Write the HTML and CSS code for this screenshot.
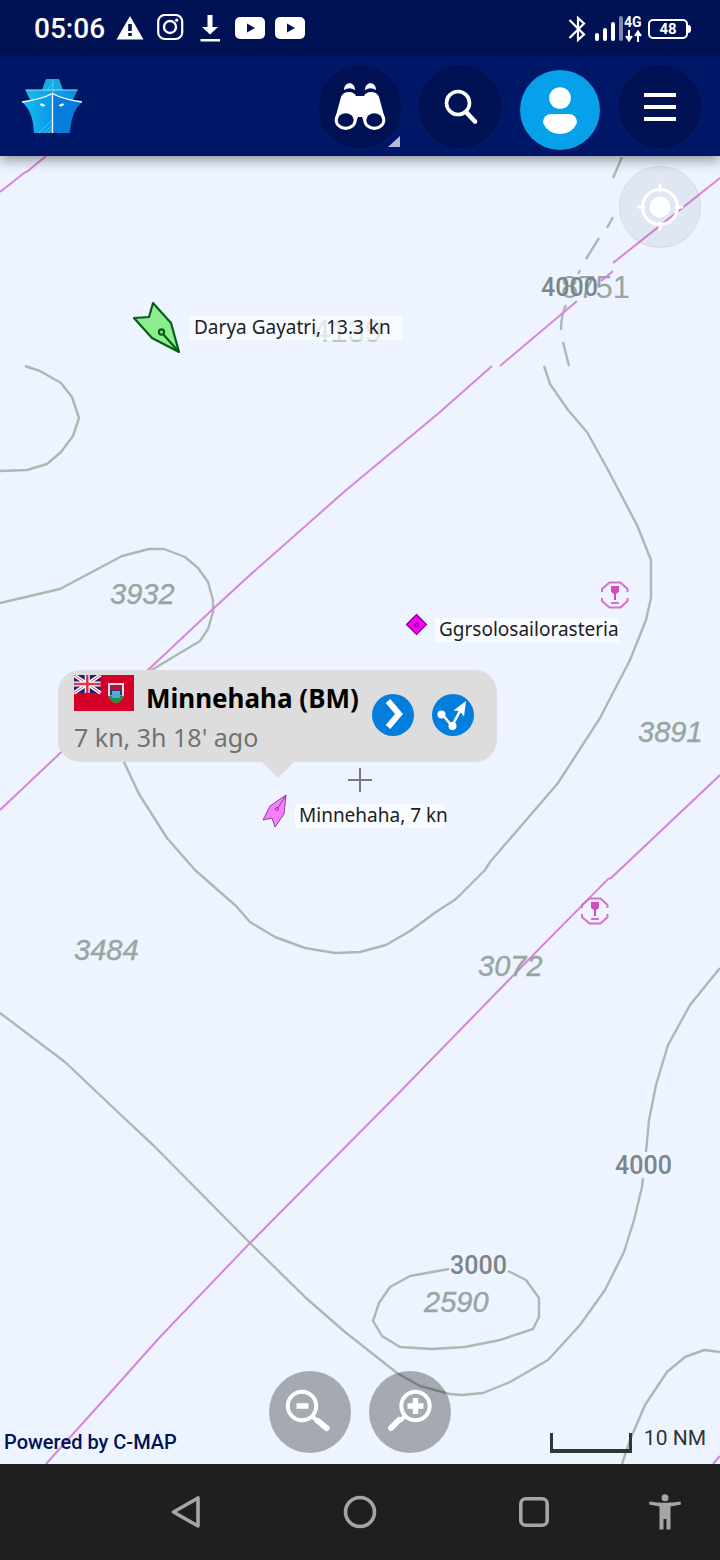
FILE: index.html
```html
<!DOCTYPE html>
<html lang="en">
<head>
<meta charset="utf-8">
<meta name="viewport" content="width=device-width, initial-scale=1">
<title>Live map</title>
<link rel="stylesheet" href="styles.css">
</head>
<body>
<div class="screen">
  <div class="status">
    <div class="status-left">
      <span class="clock">05:06</span>
      <svg width="30" height="30" viewBox="0 0 30 30"><path d="M15 2 28.500 25.500H1.500Z" fill="#fff"/><path d="M15 10v7M15 19v3" stroke="#001253" stroke-width="3.600"/></svg>
      <svg width="30" height="30" viewBox="0 0 30 30" fill="none" stroke="#fff"><rect x="3.200" y="1" width="24" height="24" rx="6.500" stroke-width="2.200"/><circle cx="15" cy="13" r="6" stroke-width="2.400"/><circle cx="21.700" cy="6.200" r="1.600" fill="#fff" stroke="none"/></svg>
      <svg width="30" height="30" viewBox="0 0 30 30" fill="#fff"><path d="M12.500 1h5v12h5.500l-8 7.500-8-7.500h5.500zM5.500 25h19.500v2.500H5.500z"/></svg>
      <svg width="30" height="30" viewBox="0 0 30 30"><rect y="3" width="30" height="22" rx="5" fill="#fff"/><path d="M12 9.500v9l8-4.500z" fill="#001253"/></svg>
      <svg width="30" height="30" viewBox="0 0 30 30"><rect y="3" width="30" height="22" rx="5" fill="#fff"/><path d="M12 9.500v9l8-4.500z" fill="#001253"/></svg>
    </div>
    <div class="status-right">
      <svg width="24" height="28" viewBox="0 0 24 28" fill="none" stroke="#fff" stroke-width="2.200"><path d="M3.500 5 18 19.500l-6 5.500V3l6 5.500L3.500 23"/></svg>
      <svg width="50" height="32" viewBox="0 -2 50 32"><g stroke="#fff" stroke-width="4" stroke-linecap="round"><path d="M3 20v4M11 15v9M19 9v15"/><path d="M27 3v21" stroke="#7f88ab"/></g><text class="net" x="30" y="12">4G</text><path d="M35 15v10m-3-4 3 4.500 3-4.500M44 27V17m-3 4 3-4.500 3 4.500" stroke="#fff" stroke-width="2" fill="#fff"/></svg>
      <span class="battery">48</span>
    </div>
  </div>

  <header class="appbar">
    <a class="logo" href="#" aria-label="Home">
      <svg width="64" height="58" viewBox="0 0 64 58">
        <defs>
          <linearGradient id="hullLeft"><stop offset="0" stop-color="#16bdf3"/><stop offset="1" stop-color="#0798e6"/></linearGradient>
          <linearGradient id="deck"><stop offset="0" stop-color="#18b9ee"/><stop offset="1" stop-color="#078fe2"/></linearGradient>
        </defs>
        <path d="M26 1h13l4 11H22z" fill="#16a9df"/>
        <path d="M5.500 12h52L52 24H11z" fill="url(#deck)"/>
        <path d="M5.500 12h52" stroke="#8be3ff" stroke-width="1"/>
        <path d="M2 24 Q22 21 32.500 15.500V55H14C13.500 41 10 31 2 24z" fill="url(#hullLeft)"/>
        <path d="M62 24 Q42 21 32.500 15.500V55H50C51 41 54 31 62 24z" fill="#047ddb"/>
        <path d="M2 24 Q22 21 32.500 15.500 Q42 21 62 24M32.500 16v39" fill="none" stroke="#fff" stroke-width="1.300"/>
        <path d="M33 1v14M27 12l5-6M19 55l13-13M24 55l8-8M28 55l4-4" stroke="#65d9fb" stroke-width=".7"/>
        <path d="M20 26c2-1 5 0 5 2-2 1-5 0-5-2zM44 26c-2-1-5 0-5 2 2 1 5 0 5-2z" fill="#fff"/>
      </svg>
    </a>
    <nav class="tools">
      <button class="round" type="button" aria-label="Explore">
        <svg width="82" height="82" viewBox="0 0 82 82">
          <g fill="#fff">
            <path d="M25 24c0-9 11-9 11 0q-5.500-3.500-11 0zM46 24c0-9 11-9 11 0q-5.500-3.500-11 0z"/>
            <path d="M22 31q2-5 8-5 5 0 7 4h8q2-4 7-4 6 0 8 5l6 22-21 3-2-5h-4l-2 5-21-3z"/>
            <ellipse cx="26.700" cy="54" rx="11" ry="10"/><ellipse cx="55.300" cy="54" rx="11" ry="10"/>
          </g>
          <ellipse cx="26.700" cy="54" rx="8" ry="6.700" fill="#001253"/><ellipse cx="55.300" cy="54" rx="8" ry="6.700" fill="#001253"/>
          <path d="M81 70v11H69z" fill="#b3bbd9"/>
        </svg>
      </button>
      <button class="round" type="button" aria-label="Search">
        <svg width="82" height="82" viewBox="0 0 82 82" fill="none" stroke="#fff"><circle cx="39" cy="37" r="11.500" stroke-width="3.600"/><path d="M47 46 56 55.500" stroke-width="4.600" stroke-linecap="round"/></svg>
      </button>
      <button class="avatar" type="button" aria-label="Account">
        <svg width="82" height="88" viewBox="0 0 82 88"><circle cx="41" cy="47" r="40" fill="#06a1ea"/><g fill="#fff"><circle cx="41" cy="35" r="10.800"/><path d="M24 60q0-9 9-9h16q9 0 9 9-5 11-17 11T24 60z"/></g></svg>
      </button>
      <button class="round" type="button" aria-label="Menu">
        <svg width="82" height="82" viewBox="0 0 82 82"><path d="M25 29h32M25 41h32M25 53h32" stroke="#fff" stroke-width="4"/></svg>
      </button>
    </nav>
  </header>

  <main class="map">
    <svg class="chart" viewBox="0 156 720 1308" preserveAspectRatio="xMinYMin slice">
      <g class="sounding">
        <text class="upright faint" x="313" y="342">4139</text>
        <text class="upright" x="561" y="298">8751</text>
      </g>
      <g class="contour">
        <path d="M25 366 40 371 61 383 72 397 79 418 73 436 61 452 47 464 27 470 0 471"/>
        <path d="M0 603 60 589 122 556 149 549H164L185 557 198 568 208 582 213 600V612L208 629 200 641 150 671"/>
        <path d="M123 760 139 794 167 838 195 870 236 906 250 922 275 937 305 948 335 953 360 952 386 945 410 931 436 912 456 899 485 870 490 862 558 783 600 718 630 660 646 620 651 598V560L637 525 608 470 587 432 568 410 550 384 544 366"/>
        <path d="M622 157 613 178M613 217 607 228M599 238 586 259M580 270 578 274M566 305Q561 315 561 330M563 342 569 366"/>
        <path d="M0 1013 65 1062 122 1116 153 1145 250 1243 306 1298 345 1332 397 1373 420 1386 450 1394 462 1395 483 1393 510 1382 548 1360 580 1325 605 1290 624 1252 634 1220 642 1187 643 1178M646 1152 649 1120 656 1085 668 1045 690 1005 720 968"/>
        <path d="M449 1269 410 1276 390 1287 379 1303 373 1321 382 1336 400 1347 432 1349 465 1347 500 1340 533 1329 539 1317V1298L526 1280 508 1271"/>
        <path d="M720 1352 704 1350 685 1357 667 1372 645 1405 630 1440 622 1464"/>
      </g>
      <g class="track">
        <path d="M46 156 28 171 24 173 0 192"/>
        <path d="M0 810 148 670 213 609 250 575 345 491 440 412 492 366M500 366 577 301M601 281 613 271M613 263 720 178"/>
        <path d="M720 775 611 878 608 879 540 948 391 1101 250 1243 160 1337 118 1384 46 1464M713 1464 720 1456"/>
      </g>
      <g class="sounding">
        <text x="110" y="604">3932</text>
        <text x="638" y="742">3891</text>
        <text x="74" y="960">3484</text>
        <text x="478" y="976">3072</text>
        <text x="424" y="1312">2590</text>
      </g>
      <g class="depth">
        <text x="541" y="296">4000</text>
        <text x="615" y="1174">4000</text>
        <text x="450" y="1274">3000</text>
      </g>
      <g id="caution" class="caution">
        <path d="M602 592V589L609.500 582.500H620.500L627.500 589V592M602 598V601L609.500 607.500H620.500L627.500 601V598M611 603H619"/>
        <path class="solid" d="M611 586H619V592L616 594V600H614V594L611 592Z"/>
      </g>
      <use href="#caution" x="-20" y="316"/>

      <g stroke="#075f12" stroke-width="2.200" stroke-linejoin="round">
        <path d="M153 303 171 323 179 352 152 338 134 318 149 317Z" fill="#8dee91"/>
        <path d="M179 352 163 334" /><circle cx="161.500" cy="332" r="2.600" fill="#8dee91"/>
      </g>
      <g stroke="#8d4595" stroke-width="1" stroke-linejoin="round">
        <path d="M286 795 284 814 275 827 272 818 263 820 270 806Z" fill="#f87dfa"/>
        <path d="M286 795 278 808"/><circle cx="277" cy="809" r="1.500" fill="#f87dfa"/>
      </g>
      <g stroke="#720078" stroke-width="1.200">
        <path d="M416.500 614.500 426.500 624.500 416.500 634.500 406.500 624.500Z" fill="#f800f5"/><circle cx="416.500" cy="625" r="1.800" fill="none"/>
      </g>
      <g class="plate">
        <rect x="190" y="316" width="212" height="24"/>
        <rect x="435" y="618" width="184" height="24"/>
        <rect x="295" y="804" width="150" height="24"/>
      </g>
      <g class="ship">
        <text x="194" y="334">Darya Gayatri, 13.3 kn</text>
        <text x="439" y="636">Ggrsolosailorasteria</text>
        <text x="299" y="822">Minnehaha, 7 kn</text>
      </g>
      <path d="M348 780H372M360 768V792" stroke="#77797f" stroke-width="2"/>
    </svg>

    <button class="locate" type="button" aria-label="My location">
      <svg width="80" height="80" viewBox="0 0 80 80" fill="none" stroke="#fff" stroke-width="3.200" stroke-linecap="round"><circle cx="40" cy="40" r="17.500"/><circle cx="40" cy="40" r="10.500" fill="#fff" stroke="none"/><path d="M40 18v6M40 56v6M18 40h6M56 40h6"/></svg>
    </button>

    <article class="popup">
      <div class="popup-text">
        <div class="popup-title">
          <svg class="flag" width="60" height="36" viewBox="0 0 60 36">
            <path d="M0 0h60v36H0z" fill="#d4002a"/><path d="M0 0h26.500v18H0z" fill="#1c2377"/>
            <path d="M0 0 26.500 18M26.500 0 0 18" stroke="#fff" stroke-width="3.600"/><path d="M0 0 26.500 18M26.500 0 0 18" stroke="#e65361" stroke-width="1"/>
            <path d="M13.200 0v18M0 9h26.500" stroke="#fff" stroke-width="5"/><path d="M13.200 0v18M0 9h26.500" stroke="#e33546" stroke-width="2.600"/>
            <path d="M34 8h16v12q-2 6-8 8-6-2-8-8z" fill="#e9dde0"/><path d="M36 10h12v5H36z" fill="#a51b45"/><path d="M36 15h12v5H36z" fill="#273774"/><path d="M38 16h8v6h-8z" fill="#6da5cd"/><path d="M34.500 21q8-3 15 0-2 6-7.500 7-6-1-7.500-7z" fill="#1f9147"/><path d="M38 19h8v4h-8z" fill="#45a9dc"/><path d="m39 12 3-1 2 3-2 2z" fill="#d4002a"/>
          </svg>
          <h1>Minnehaha (BM)</h1>
        </div>
        <p>7 kn, 3h 18' ago</p>
      </div>
      <button class="action" type="button" aria-label="Details">
        <svg width="42" height="42" viewBox="0 0 42 42"><path d="M16 7 27 20 16 33" fill="none" stroke="#fff" stroke-width="6"/></svg>
      </button>
      <button class="action" type="button" aria-label="Show track">
        <svg width="42" height="42" viewBox="0 0 42 42"><path d="M10 20 20 32 29 15" fill="none" stroke="#fff" stroke-width="2.600"/><circle cx="9.500" cy="20.500" r="4" fill="#fff"/><circle cx="20.500" cy="32" r="4" fill="#fff"/><path d="M34 7 21.500 16.500l6 .5 4.500 5.500z" fill="#fff"/></svg>
      </button>
    </article>

    <div class="map-foot">
      <a class="credit" href="#">Powered by C-MAP</a>
      <div class="zoom">
        <button type="button" aria-label="Zoom out">
          <svg width="82" height="82" viewBox="0 0 82 82" fill="none" stroke="#fff"><circle cx="33" cy="35" r="14.200" stroke-width="4"/><path d="M27.500 35h12" stroke-width="5.500"/><path d="M43 45l5 5" stroke-width="4"/><path d="M49 50l8.500 7" stroke-width="6" stroke-linecap="round"/></svg>
        </button>
        <button type="button" aria-label="Zoom in">
          <svg width="82" height="82" viewBox="0 0 82 82" fill="none" stroke="#fff"><circle cx="46.500" cy="35" r="14.200" stroke-width="4"/><path d="M38.500 35h16M46.500 27v16" stroke-width="5.500"/><path d="M36 45l-5 5" stroke-width="4"/><path d="M30 49l-8 8" stroke-width="6" stroke-linecap="round"/></svg>
        </button>
      </div>
      <div class="scale"><span class="ruler"></span><span>10 NM</span></div>
    </div>
  </main>

  <nav class="sysnav">
    <button type="button" aria-label="Back"><svg width="40" height="40" viewBox="0 0 40 40" fill="none" stroke="#a5a5a5" stroke-width="3.600" stroke-linejoin="round"><path d="M32 6v28L7.500 20z"/></svg></button>
    <button type="button" aria-label="Home screen"><svg width="40" height="40" viewBox="0 0 40 40" fill="none" stroke="#a5a5a5" stroke-width="3.600"><circle cx="20" cy="20" r="14.500"/></svg></button>
    <button type="button" aria-label="Recent apps"><svg width="40" height="40" viewBox="0 0 40 40" fill="none" stroke="#a5a5a5" stroke-width="3.600"><rect x="6.800" y="6.800" width="26.400" height="26.400" rx="5"/></svg></button>
    <button type="button" aria-label="Accessibility"><svg width="40" height="40" viewBox="0 0 40 40" fill="#a5a5a5"><circle cx="20" cy="5.800" r="3.500"/><path d="M4.500 9.500Q20 12 35.500 9.500L36 12.500 25.500 14.500V37.500h-4V27h-3V37.500h-4V14.500L4 12.500z"/></svg></button>
  </nav>
</div>
</body>
</html>
```
FILE: styles.css
```css
* { box-sizing: border-box; }

body {
  margin: 0;
  font-family: "Noto Sans", sans-serif;
  background: #1f1f1f;
}

button {
  padding: 0;
  border: 0;
  background: none;
  cursor: pointer;
}

svg { display: block; }

.screen {
  display: flex;
  flex-direction: column;
  min-height: 100vh;
}

.status {
  display: flex;
  justify-content: space-between;
  align-items: center;
  height: 56px;
  padding: 2px 28px 0 34px;
  background: #001253;
  color: #fff;
}

.status-left {
  display: flex;
  align-items: center;
  gap: 10px;
}

.clock {
  font: 500 28px/30px Roboto, sans-serif;
}

.status-right {
  display: flex;
  align-items: center;
  gap: 4px;
}

.net {
  fill: #fff;
  font: bold 14px Roboto, sans-serif;
}

.battery {
  position: relative;
  width: 40px;
  margin-right: 4px;
  border: 2px solid #fff;
  border-radius: 5px;
  font: bold 15px/16px Roboto, sans-serif;
  text-align: center;
}

.battery::after {
  content: "";
  position: absolute;
  top: 4px;
  right: -5px;
  width: 3px;
  height: 8px;
  border-radius: 0 3px 3px 0;
  background: #fff;
}

.appbar {
  position: relative;
  z-index: 2;
  display: flex;
  justify-content: space-between;
  align-items: center;
  height: 100px;
  padding: 2px 19px 0 20px;
  background: #001768;
  box-shadow: 0 4px 12px rgba(0, 0, 0, .4);
}

.tools {
  display: flex;
  align-items: center;
  gap: 18px;
}

.round {
  border-radius: 50%;
  background: #001253;
  box-shadow: inset 0 0 0 1px #001049;
}

.map {
  position: relative;
  flex: 1;
  min-height: 800px;
  overflow: hidden;
  background: #edf4ff;
}

.chart {
  position: absolute;
  width: 100%;
  height: 100%;
}

.contour {
  fill: none;
  stroke: #acb8b4;
  stroke-width: 2.4px;
  stroke-linejoin: round;
}

.track {
  fill: none;
  stroke: #d984d8;
  stroke-width: 2px;
}

.sounding {
  fill: #9aa5a3;
  stroke: #9aa5a3;
  stroke-width: .4px;
  font: italic 29px "Liberation Sans", sans-serif;
}

.upright {
  stroke: none;
  font-size: 31px;
  font-style: normal;
}

.faint { opacity: .6; }

.depth {
  fill: #7c8587;
  font: 500 25px Roboto, sans-serif;
}

.caution {
  fill: none;
  stroke: #d670cb;
  stroke-width: 2px;
}

.solid {
  fill: #cf4fc0;
  stroke-width: 0;
}

.plate { fill: rgba(255, 255, 255, .6); }

.ship {
  fill: #1c1e22;
  font: 19px "Noto Sans", sans-serif;
}

.locate {
  position: absolute;
  top: 10px;
  right: 19px;
  border: 1px solid rgba(0, 0, 0, .06);
  border-radius: 50%;
  background: rgba(0, 0, 0, .05);
}

.popup {
  position: absolute;
  top: 514px;
  left: 58px;
  display: flex;
  align-items: center;
  gap: 18px;
  height: 92px;
  padding: 4px 23px 6px 16px;
  border-radius: 22px;
  background: #ddd;
}

.popup::after {
  content: "";
  position: absolute;
  top: 91px;
  left: 203px;
  border: 17px solid transparent;
  border-top-color: #ddd;
  border-bottom: 0;
}

.popup-text { width: 280px; }

.popup-title {
  display: flex;
  align-items: flex-start;
  gap: 12px;
  white-space: nowrap;
}

.flag { flex: none; }

.popup h1 {
  margin: 0;
  font: bold 26px/46px "Noto Sans", sans-serif;
}

.popup p {
  margin: 0;
  padding-bottom: 2px;
  color: #727272;
  font: 25px/32px "Noto Sans", sans-serif;
}

.action {
  border-radius: 50%;
  background: #047edd;
}

.map-foot {
  position: absolute;
  right: 0;
  bottom: 0;
  left: 0;
  display: grid;
  grid-template-columns: 1fr auto 1fr;
  align-items: end;
  padding-bottom: 11px;
}

.credit {
  padding-left: 4px;
  color: #001253;
  font: 500 20px/22px Roboto, sans-serif;
  text-decoration: none;
  white-space: nowrap;
}

.zoom {
  display: flex;
  gap: 18px;
}

.zoom button {
  border-radius: 50%;
  background: rgba(0, 0, 0, .3);
}

.scale {
  display: flex;
  justify-content: flex-end;
  gap: 12px;
  padding-right: 14px;
  color: #303535;
  font: 21px/30px Roboto, sans-serif;
}

.ruler {
  align-self: flex-end;
  width: 82px;
  height: 20px;
  border: solid #303535;
  border-width: 0 3px 4px;
}

.sysnav {
  display: grid;
  grid-template-columns: 174fr 174fr 174fr 88fr;
  align-items: center;
  justify-items: center;
  height: 96px;
  padding: 0 11px 0 99px;
  background: #1f1f1f;
}
```
